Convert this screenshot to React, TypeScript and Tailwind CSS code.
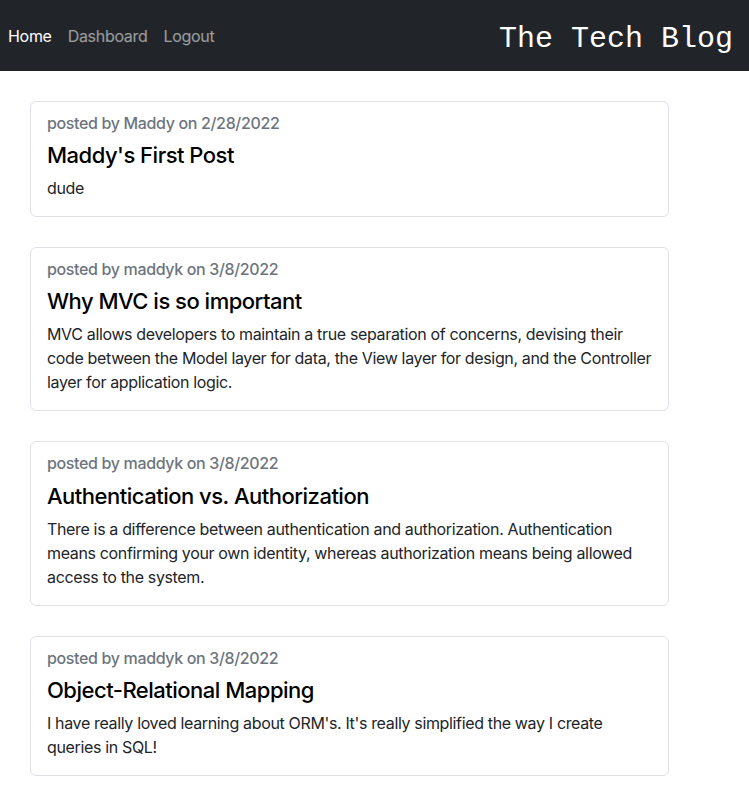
import React from "react"

type Post = {
  author: string
  date: string
  title: string
  body: string
}

const POSTS: Post[] = [
  { author: "Maddy", date: "2/28/2022", title: "Maddy's First Post", body: "dude" },
  {
    author: "maddyk",
    date: "3/8/2022",
    title: "Why MVC is so important",
    body: "MVC allows developers to maintain a true separation of concerns, devising their code between the Model layer for data, the View layer for design, and the Controller layer for application logic.",
  },
  {
    author: "maddyk",
    date: "3/8/2022",
    title: "Authentication vs. Authorization",
    body: "There is a difference between authentication and authorization. Authentication means confirming your own identity, whereas authorization means being allowed access to the system.",
  },
  {
    author: "maddyk",
    date: "3/8/2022",
    title: "Object-Relational Mapping",
    body: "I have really loved learning about ORM's. It's really simplified the way I create queries in SQL!",
  },
]

function PostCard({ post }: { post: Post }) {
  return (
    <article className="rounded-[6px] border border-[#dee2e6] bg-white p-4">
      <h6 className="-mt-1 mb-[10px] text-[16px] font-medium leading-[19.2px] tracking-[-0.35px] text-[#6c757d]">
        posted by {post.author} on {post.date}
      </h6>
      <h5 className="mb-2 text-[22px] font-medium leading-[25px] tracking-[-0.5px] text-black">
        {post.title}
      </h5>
      <p className="text-[16px] leading-[24px] tracking-[-0.35px] text-[#212529]">{post.body}</p>
    </article>
  )
}

export default function App() {
  return (
    <div className="min-h-screen bg-white font-['Inter','Liberation_Sans',sans-serif]">
      {/* Top nav */}
      <nav className="flex h-[71px] items-center justify-between bg-[#212529] pr-4">
        <ul className="flex items-center tracking-[-0.3px]">
          <li>
            <a className="block px-2 text-[16px] text-white">Home</a>
          </li>
          <li>
            <a className="block px-2 text-[16px] text-white/55">Dashboard</a>
          </li>
          <li>
            <a className="block px-2 text-[16px] text-white/55">Logout</a>
          </li>
        </ul>
        <h1 className="mt-[6px] font-['Liberation_Mono','Courier_New',monospace] text-[30px] font-normal leading-none text-white">
          The Tech Blog
        </h1>
      </nav>

      <main className="flex w-[669px] flex-col gap-[30px] pl-[30px] pt-[30px]">
        {POSTS.map((post) => (
          <PostCard key={post.title} post={post} />
        ))}
      </main>
    </div>
  )
}
